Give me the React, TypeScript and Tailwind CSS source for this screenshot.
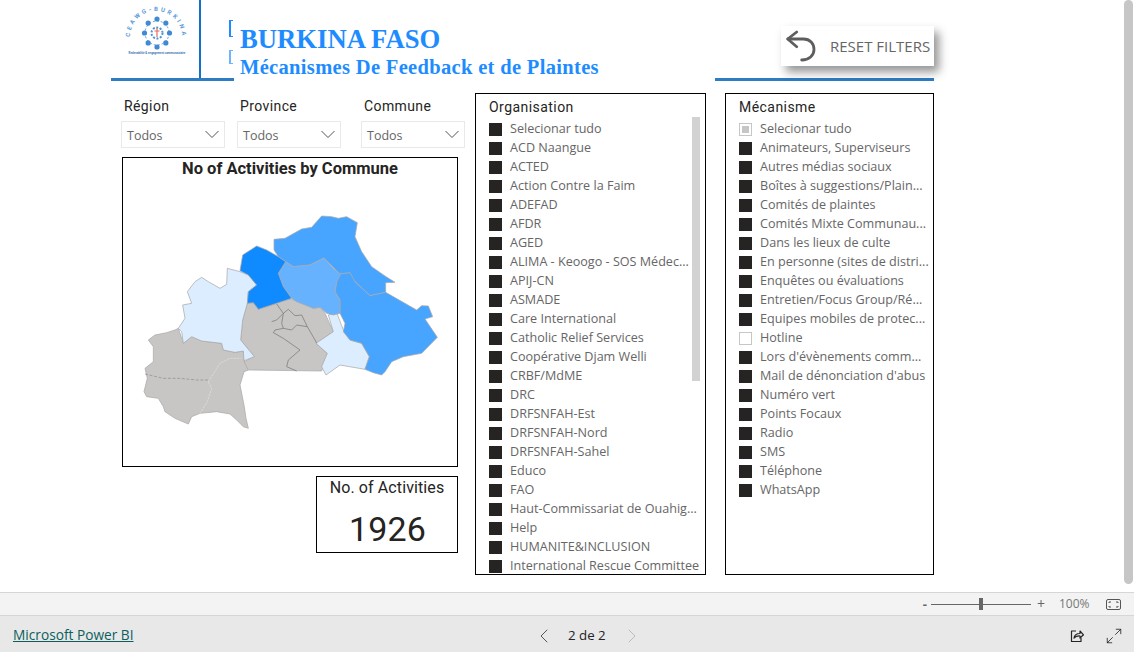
import React from 'react'
import { ChevronLeft, ChevronRight, Maximize2 } from 'lucide-react'

const organisations = [
  'Selecionar tudo', 'ACD Naangue', 'ACTED', 'Action Contre la Faim', 'ADEFAD', 'AFDR', 'AGED',
  'ALIMA - Keoogo - SOS Médec...', 'APIJ-CN', 'ASMADE', 'Care International', 'Catholic Relief Services',
  'Coopérative Djam Welli', 'CRBF/MdME', 'DRC', 'DRFSNFAH-Est', 'DRFSNFAH-Nord', 'DRFSNFAH-Sahel',
  'Educo', 'FAO', 'Haut-Commissariat de Ouahig...', 'Help', 'HUMANITE&INCLUSION', 'International Rescue Committee',
]

const mecanismes = [
  'Selecionar tudo', 'Animateurs, Superviseurs', 'Autres médias sociaux', 'Boîtes à suggestions/Plain...',
  'Comités de plaintes', 'Comités Mixte Communau...', 'Dans les lieux de culte', 'En personne (sites de distri...',
  'Enquêtes ou évaluations', 'Entretien/Focus Group/Ré...', 'Equipes mobiles de protec...', 'Hotline',
  "Lors d'évènements comm...", "Mail de dénonciation d'abus", 'Numéro vert', 'Points Focaux', 'Radio', 'SMS',
  'Téléphone', 'WhatsApp',
]

const din = "font-['Roboto',sans-serif]"
const segoe = "font-['Open_Sans',sans-serif]"

function Logo() {
  const dots = [0, 45, 90, 135, 180, 225, 270, 315]
  return (
    <svg className="shrink-0" width="88" height="78" viewBox="0 0 88 78">
      <defs>
        <path id="logo-arc" d="M19 37 A26 26 0 0 1 71 37" fill="none" />
      </defs>
      <text fontSize="6" fontWeight="700" fill="#5b9bd8" letterSpacing="2.6" fontFamily="Roboto, sans-serif">
        <textPath href="#logo-arc">CEAWG-BURKINA</textPath>
      </text>
      <circle cx="46" cy="33" r="12" fill="none" stroke="#5b9bd8" strokeWidth="1" strokeDasharray="2 2" />
      {dots.map((d) => (
        <circle
          key={d}
          cx={46 + 12.5 * Math.cos((d * Math.PI) / 180)}
          cy={33 + 14 * Math.sin((d * Math.PI) / 180)}
          r="2.6"
          fill="#3f8ad2"
        />
      ))}
      <circle cx="46" cy="33" r="5.5" fill="none" stroke="#4f93d6" strokeWidth="2" strokeDasharray="2 1.5" />
      <path d="M46 28v9M43.500 31h5" stroke="#e0705a" strokeWidth="1.2" />
      <text x="46" y="54" textAnchor="middle" fontSize="2.900" fill="#3f78b8" fontWeight="700" fontFamily="Roboto, sans-serif">
        Redevabilité & engagement communautaire
      </text>
    </svg>
  )
}

function BurkinaMap() {
  return (
    <svg className="block" width="334" height="276" viewBox="9 120 1002 828">
      <g stroke="#a8a8a8" strokeWidth="2.2" strokeLinejoin="round">
        <polygon
          fill="#c8c6c4"
          points="85,570 105,555 140,548 165,540 175,535 190,580 215,560 245,573 305,580 310,600 345,607 370,603 372,632 395,645 385,660 372,665 360,705 372,765 378,805 385,835 370,830 350,810 330,792 290,785 240,790 215,800 205,822 165,805 135,785 130,770 115,745 80,740 72,725 82,685 75,655 100,635 100,590"
        />
        <polygon
          fill="#c8c6c4"
          points="400,458 415,478 470,460 480,450 515,448 550,458 580,475 600,472 615,490 640,545 588,580 622,610 605,663 385,660 372,635 403,620 362,570 368,510 382,460"
        />
        <polygon
          fill="#dcedff"
          points="322,355 360,365 385,375 410,405 385,425 382,460 368,510 362,570 403,620 372,632 370,603 345,607 310,600 305,580 245,573 215,560 190,580 185,545 175,535 195,505 188,465 215,460 202,425 225,395 245,382 265,395 300,415 320,403"
        />
        <polygon
          fill="#dcedff"
          points="650,488 672,545 690,570 725,580 748,620 735,658 660,645 618,675 605,650 622,610 588,580 640,545 625,495"
        />
        <polygon
          fill="#47a5ff"
          points="462,268 495,265 545,237 575,232 605,198 635,200 655,205 680,200 712,218 705,260 725,305 755,350 795,378 825,397 797,398 797,427 750,437 700,390 690,368 660,372 612,324 570,345 520,350 497,335 475,320 462,300"
        />
        <polygon
          fill="#47a5ff"
          points="660,372 690,368 705,395 750,437 797,427 890,480 905,467 925,468 938,500 915,507 952,562 905,610 850,620 815,635 795,665 785,675 760,668 735,658 748,620 725,580 690,570 670,545 675,520 660,490 660,450 645,425 650,395"
        />
        <polygon
          fill="#66b2ff"
          points="497,335 520,350 570,345 612,324 640,355 662,372 650,395 645,425 660,450 660,490 640,495 620,490 600,472 580,475 530,455 515,445 490,410 475,370"
        />
        <polygon
          fill="#0f8aff"
          points="410,288 440,300 475,320 497,335 475,370 490,410 515,445 470,460 415,478 400,458 382,460 385,425 410,405 385,375 360,362 368,315"
        />
      </g>
      <g fill="none" stroke="#777" strokeWidth="2.2" strokeLinejoin="round">
        <polyline points="470,462 490,490 470,510 455,515" />
        <polyline points="490,490 505,478 525,497 545,495 562,530 530,525 515,540 490,535 485,520 490,490" />
        <polyline points="490,535 465,540 460,548 490,565 540,600 505,630 500,650 530,663" />
        <polyline points="562,530 585,570 590,580" />
      </g>
      <g fill="none" stroke="#e4e4e4" strokeWidth="2" strokeDasharray="7 3">
        <polyline points="265,695 300,640 330,625 365,625" />
        <polyline points="265,695 275,715 262,755 240,790" />
      </g>
      <polyline points="75,672 130,685 180,685 230,690 265,690" fill="none" stroke="#8a8a8a" strokeWidth="2" strokeDasharray="9 5" />
    </svg>
  )
}

function Dropdown({ label, className }: { label: string; className: string }) {
  return (
    <div className={`flex w-[104px] flex-col ${className}`}>
      <div className={`h-[28px] pl-[3px] pt-[3px] text-[14px] tracking-[0.4px] text-[#252423] ${din}`}>{label}</div>
      <div className="flex h-[27px] items-center justify-between border border-[#e9e9e9] pl-[5px] pr-[5px]">
        <span className={`pt-[3px] text-[12.5px] text-[#666] ${segoe}`}>Todos</span>
        <svg width="14" height="9" viewBox="0 0 14 9" fill="none" stroke="#555" strokeWidth="1">
          <path d="M0.5 1 7 7.500 13.500 1" />
        </svg>
      </div>
    </div>
  )
}

function Check({ state }: { state: 'on' | 'off' | 'partial' }) {
  if (state === 'on') return <span className="h-[13px] w-[13px] shrink-0 bg-[#252423]" />
  if (state === 'partial') {
    return (
      <span className="flex h-[13px] w-[13px] shrink-0 items-center justify-center border border-[#c8c6c4]">
        <span className="h-[7px] w-[7px] bg-[#c8c6c4]" />
      </span>
    )
  }
  return <span className="h-[13px] w-[13px] shrink-0 border border-[#c8c6c4]" />
}

function FilterList({ title, items, stateOf, className, scroll }: {
  title: string
  items: string[]
  stateOf: (name: string, i: number) => 'on' | 'off' | 'partial'
  className: string
  scroll?: boolean
}) {
  return (
    <div className={`relative h-[482px] overflow-hidden border border-black ${className}`}>
      <div className={`pl-[13px] pt-[5px] text-[14px] leading-[17px] tracking-[0.45px] text-[#252423] ${din}`}>{title}</div>
      <div className="flex h-[458px] flex-col overflow-hidden pl-[13px] pt-[4px]">
        {items.map((name, i) => (
          <div key={name} className="flex h-[19px] shrink-0 items-center gap-[8px]">
            <Check state={stateOf(name, i)} />
            <span className={`whitespace-nowrap text-[12.6px] text-[#666] ${segoe}`}>{name}</span>
          </div>
        ))}
      </div>
      {scroll && <div className="absolute left-[216px] top-[23px] h-[264px] w-[8px] bg-[#d2d2d2]" />}
    </div>
  )
}

export default function App() {
  return (
    <div className="flex h-[652px] w-[1134px] flex-col overflow-hidden bg-white">
      {/* Report page */}
      <div className="relative h-[592px] pl-[111px]">
        <div className="w-[823px]">
          {/* Header */}
          <div className="flex h-[81px]">
            <div className="flex h-[81px] w-[123px] shrink-0 border-b-[3px] border-[#2d7cc4]">
              <Logo />
              <div className="w-[2px] shrink-0 bg-[#1172c8]" />
              {/* bits of the older title that stick out behind the new one */}
              <div className="ml-[28px] flex w-[5px] flex-col pt-[20px]">
                <div className="h-[17px] w-[4px] border-y border-l-2 border-[#1e8cff]" />
                <div className="mt-[13px] h-[14px] w-[4px] border-y border-l-2 border-[#6fb4ff]" />
              </div>
            </div>
            <div className="w-[481px] shrink-0 pl-[6px] pt-[23px] font-['Liberation_Serif',serif] font-bold text-[#1e8cff]">
              <div className="text-[26.67px] leading-[32px]">BURKINA FASO</div>
              <div className="text-[20.5px] leading-[24px] tracking-[0.33px]">Mécanismes De Feedback et de Plaintes</div>
            </div>
            <div className="flex h-[81px] w-[219px] shrink-0 justify-end border-b-[3px] border-[#2d7cc4] pt-[26px]">
              <div className="flex h-[40px] w-[153px] items-center bg-white pl-[5px] shadow-[5px_6px_9px_rgba(0,0,0,0.42)]">
                <svg className="shrink-0" width="30" height="32" viewBox="0 0 30 32" fill="none" stroke="#5e5e5e" strokeWidth="2.8" strokeLinecap="round" strokeLinejoin="round">
                  <path d="M10.700 2 1.700 9 10.700 16.700" />
                  <path d="M2 9h15.500C24 9 28 13.500 28 19.500S23 30 15.700 30" />
                </svg>
                <span className={`ml-[14px] whitespace-nowrap text-[15px] text-[#666] ${segoe}`}>RESET FILTERS</span>
              </div>
            </div>
          </div>

          {/* Body */}
          <div className="mt-[12px] flex">
            <div className="ml-[10px] w-[344px] shrink-0">
              <div className="flex">
                <Dropdown label="Région" className="" />
                <Dropdown label="Province" className="ml-[12px]" />
                <Dropdown label="Commune" className="ml-[20px]" />
              </div>
              <div className="ml-[1px] mt-[9px] h-[310px] w-[336px] border border-black">
                <div className={`h-[32px] text-center text-[16.5px] font-bold leading-[21px] text-[#252423] ${din}`}>No of Activities by Commune</div>
                <BurkinaMap />
              </div>
              <div className="ml-[195px] mt-[9px] h-[77px] w-[142px] border border-black text-center">
                <div className={`text-[16px] leading-[21px] tracking-[0.1px] text-[#252423] ${din}`}>No. of Activities</div>
                <div className={`pl-[1px] pt-[8px] text-[34px] leading-[46px] tracking-[0.2px] text-[#252423] ${din}`}>1926</div>
              </div>
            </div>
            <FilterList
              title="Organisation"
              items={organisations}
              stateOf={() => 'on'}
              className="ml-[10px] w-[231px] shrink-0"
              scroll
            />
            <FilterList
              title="Mécanisme"
              items={mecanismes}
              stateOf={(name, i) => (i === 0 ? 'partial' : name === 'Hotline' ? 'off' : 'on')}
              className="ml-[19px] w-[209px] shrink-0"
            />
          </div>
        </div>

        {/* Page scrollbar */}
        <div className="absolute right-[1px] top-0 h-[584px] w-[9px] rounded-full bg-[#c6c6c6]" />
      </div>

      {/* Zoom bar */}
      <div className="flex h-[24px] items-center justify-end border-y border-[#d6d6d6] bg-[#f3f3f3] pr-[13px]">
        <span className={`text-[13px] font-bold leading-none text-[#666] ${segoe}`}>-</span>
        <div className="relative ml-[4px] flex h-[12px] w-[100px] items-center">
          <div className="h-px w-full bg-[#666]" />
          <div className="absolute left-[48px] top-0 h-[12px] w-[4px] bg-[#666]" />
        </div>
        <span className={`ml-[6px] text-[14px] leading-none text-[#666] ${segoe}`}>+</span>
        <span className={`ml-[14px] w-[30px] text-[12px] text-[#777] ${segoe}`}>100%</span>
        <svg className="ml-[17px]" width="15" height="11" viewBox="0 0 15 11" fill="none" stroke="#555" strokeWidth="1">
          <rect x="0.5" y="0.5" width="14" height="10" rx="1.5" />
          <path d="M3 4V3h2M10 3h2v1M3 7v1h2M10 8h2V7" />
        </svg>
      </div>

      {/* Footer */}
      <div className="relative flex flex-1 items-center justify-between bg-[#e8e8e8] pl-[13px] pr-[11px] pt-[3px]">
        <a className={`text-[13.7px] font-medium text-[#0b5f5f] underline ${segoe}`}>Microsoft Power BI</a>
        <div className="absolute left-[532px] top-[3px] flex h-[33px] items-center">
          <ChevronLeft size={24} strokeWidth={1} color="#555" />
          <span className={`ml-[12px] w-[40px] whitespace-nowrap text-[13.3px] font-medium text-[#252423] ${segoe}`}>2 de 2</span>
          <ChevronRight className="ml-[12px]" size={24} strokeWidth={1} color="#bbb" />
        </div>
        <div className="flex items-center gap-[20px]">
          <svg width="16" height="16" viewBox="0 0 16 16" fill="none" stroke="#252423" strokeWidth="1.2" strokeLinejoin="round">
            <path d="M7 3H2.500v10.500H12V10" />
            <path d="M5 10c.5-3 3-4.500 6-4.500V3l3.500 3.800L11 10V8C8.500 7.800 6.500 8.500 5 10z" />
          </svg>
          <Maximize2 size={18} strokeWidth={1.1} color="#252423" />
        </div>
      </div>
    </div>
  )
}
